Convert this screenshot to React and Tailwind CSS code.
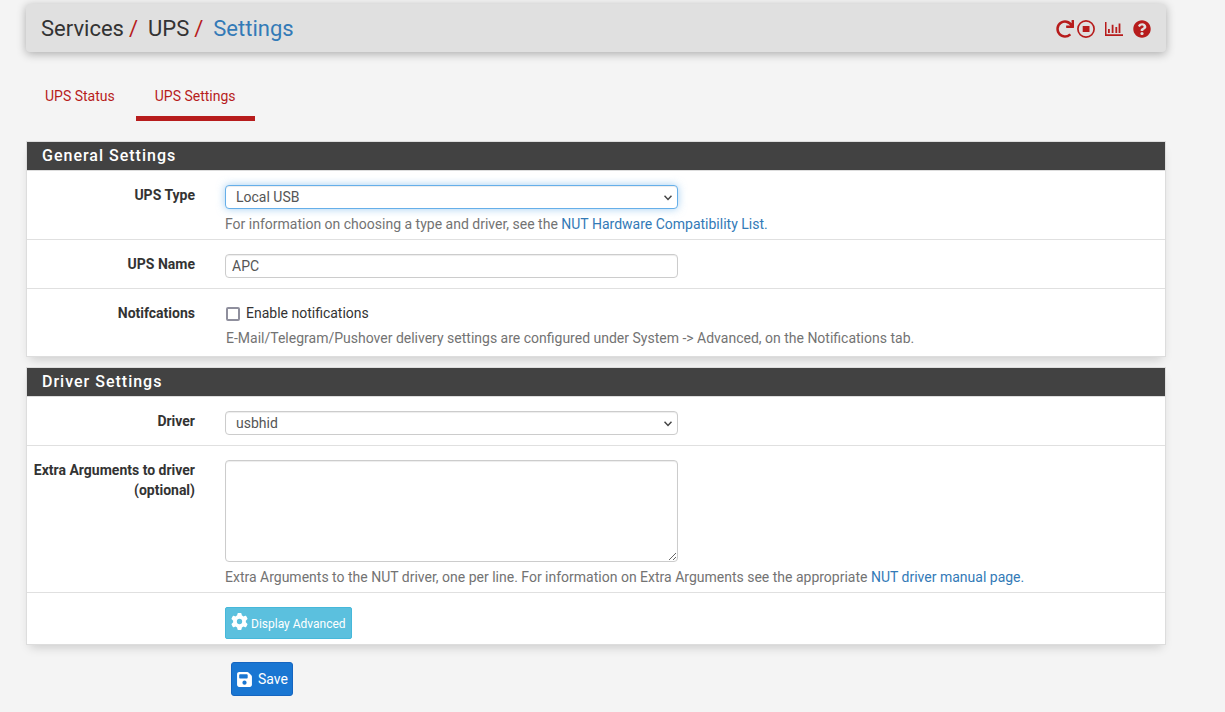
import React, { useState } from "react";
import { FaQuestionCircle, FaRedo } from "react-icons/fa";
import { FaFloppyDisk, FaGear } from "react-icons/fa6";

const inputClass =
  "block w-full rounded border border-[#ccc] bg-white text-[#555] shadow-[inset_0_1px_1px_rgba(0,0,0,0.075)] outline-none focus:border-[#66afe9] focus:shadow-[inset_0_1px_1px_rgba(0,0,0,0.075),0_0_8px_rgba(102,175,233,0.6)]";

function StopIcon() {
  return (
    <svg viewBox="0 0 18 18" className="size-[18px]" fill="currentColor" aria-hidden="true">
      <circle cx="9" cy="9" r="8.100" fill="none" stroke="currentColor" strokeWidth="1.700" />
      <rect x="5.700" y="6" width="6.800" height="6" />
    </svg>
  );
}

function ChartIcon() {
  return (
    <svg viewBox="0 0 18 14" className="h-[14px] w-[18px]" fill="currentColor" aria-hidden="true">
      <path d="M0 0h1.500v12.300H18V14H0zM3 7h1.800v4H3zM6.700 2.800h1.800V11H6.700zM10.400 5h1.800v6h-1.800zM13.600 1.500h1.800V11h-1.800z" />
    </svg>
  );
}

function Panel({ title, children }) {
  return (
    <section className="mb-[10px] border border-[#ddd] bg-white shadow-[0_6px_10px_-4px_rgba(0,0,0,0.18)]">
      <h2 className="border-b border-[#ddd] bg-[#424242] px-[15px] py-1 text-base leading-5 font-medium tracking-[1px] text-white">
        {title}
      </h2>
      <div className="divide-y divide-[#e0e0e0]">{children}</div>
    </section>
  );
}

function Row({ label, htmlFor, children }) {
  return (
    <div className="flex gap-[30px] pt-[14px] pr-[34px] pb-[5px]">
      <label htmlFor={htmlFor} className="w-[168px] shrink-0 text-right font-bold">
        {label}
      </label>
      <div className="min-w-0 flex-1">{children}</div>
    </div>
  );
}

function Select({ options, ...props }) {
  return (
    <div className="relative w-1/2">
      <select {...props} className={`${inputClass} h-6 appearance-none pr-6 pl-[10px]`}>
        {options.map((o) => (
          <option key={o}>{o}</option>
        ))}
      </select>
      <svg
        viewBox="0 0 8 6"
        className="pointer-events-none absolute top-[10px] right-1.5 h-1.5 w-2"
        fill="none"
        stroke="#444"
        strokeWidth="1.500"
        aria-hidden="true"
      >
        <path d="M.5 .8 4 4.500 7.500 .8" />
      </svg>
    </div>
  );
}

export default function App() {
  const [upsType, setUpsType] = useState("Local USB");
  const [upsName, setUpsName] = useState("APC");
  const [notify, setNotify] = useState(false);
  const [driver, setDriver] = useState("usbhid");
  const [extraArgs, setExtraArgs] = useState("");

  return (
    <div className="min-h-screen bg-[#f4f4f4] pt-1 pr-[59px] pb-4 pl-[26px] font-['Roboto',sans-serif] text-sm leading-5 text-[#333]">
      <header className="flex h-12 items-center justify-between rounded bg-[#e0e0e0] px-[15px] pt-0.5 shadow-[0_2px_10px_rgba(0,0,0,0.3)]">
        <ol className="flex text-[22px] leading-6">
          <li>Services<span className="mr-[10px] ml-[5px] text-[#b71c1c]">/</span></li>
          <li>UPS<span className="mr-[10px] ml-[5px] text-[#b71c1c]">/</span></li>
          <li><a href="#settings" className="text-[#337ab7]">Settings</a></li>
        </ol>
        <div className="flex items-center text-[#b71c1c]">
          <a href="#restart" aria-label="Restart service"><FaRedo size={18} /></a>
          <a href="#stop" aria-label="Stop service" className="ml-[3px]"><StopIcon /></a>
          <a href="#status" aria-label="Status" className="ml-[10px]"><ChartIcon /></a>
          <a href="#help" aria-label="Help" className="ml-[10px]"><FaQuestionCircle size={18} /></a>
        </div>
      </header>

      <nav className="mt-[24px] mb-5 flex text-[#b71c1c]">
        <a href="#ups-status" className="border-b-[5px] border-transparent px-[19px] py-[10px]">UPS Status</a>
        <a href="#ups-settings" className="ml-0.5 border-b-[5px] border-[#b71c1c] px-[19px] py-[10px]">UPS Settings</a>
      </nav>

      <form onSubmit={(e) => e.preventDefault()}>
        <Panel title="General Settings">
          <Row label="UPS Type" htmlFor="type">
            <Select
              id="type"
              autoFocus
              value={upsType}
              onChange={(e) => setUpsType(e.target.value)}
              options={["Local USB", "Local serial", "Remote NUT server"]}
            />
            <p className="mt-[5px] text-[#737373]">
              For information on choosing a type and driver, see the{" "}
              <a href="#hcl" className="text-[#337ab7]">NUT Hardware Compatibility List.</a>
            </p>
          </Row>
          <Row label="UPS Name" htmlFor="name">
            <div className="mb-[5px] w-1/2">
              <input
                id="name"
                type="text"
                value={upsName}
                onChange={(e) => setUpsName(e.target.value)}
                className={`${inputClass} h-6 px-1.5`}
              />
            </div>
          </Row>
          <Row label="Notifcations" htmlFor="email">
            <label className="flex items-center gap-1.5">
              <input
                id="email"
                type="checkbox"
                checked={notify}
                onChange={(e) => setNotify(e.target.checked)}
                className="mt-0.5 ml-px size-[14px] appearance-none rounded-xs border-2 border-[#8f8f9d] bg-white checked:bg-[#1976d2]"
              />
              Enable notifications
            </label>
            <p className="mt-[5px] mb-[3px] ml-px text-[#737373]">
              E-Mail/Telegram/Pushover delivery settings are configured under System -&gt; Advanced, on the Notifications tab.
            </p>
          </Row>
        </Panel>

        <Panel title="Driver Settings">
          <Row label="Driver" htmlFor="driver">
            <div className="mb-[5px]">
              <Select
                id="driver"
                value={driver}
                onChange={(e) => setDriver(e.target.value)}
                options={["usbhid", "blazer_usb"]}
              />
            </div>
          </Row>
          <Row label={<>Extra Arguments to driver<br />(optional)</>} htmlFor="extraargs">
            <div className="w-1/2">
              <textarea
                id="extraargs"
                value={extraArgs}
                onChange={(e) => setExtraArgs(e.target.value)}
                className={`${inputClass} h-[102px] px-1.5`}
              />
            </div>
            <p className="mt-[5px] text-[#737373]">
              Extra Arguments to the NUT driver, one per line. For information on Extra Arguments see the appropriate{" "}
              <a href="#manual" className="text-[#337ab7]">NUT driver manual page.</a>
            </p>
          </Row>
          <Row>
            <button
              type="button"
              className="flex h-8 items-center gap-[3px] rounded-xs border border-[#46b8da] bg-[#5bc0de] px-[5px] text-xs text-white"
            >
              <FaGear size={17} className="-mt-1" />
              <span className="mt-0.5">Display Advanced</span>
            </button>
          </Row>
        </Panel>

        <button
          type="submit"
          className="mt-[17px] ml-[205px] flex h-[34px] items-center gap-[5px] rounded-[3px] border border-[#1565c0] bg-[#1976d2] px-1 text-white"
        >
          <FaFloppyDisk size={17} />
          Save
        </button>
      </form>
    </div>
  );
}
